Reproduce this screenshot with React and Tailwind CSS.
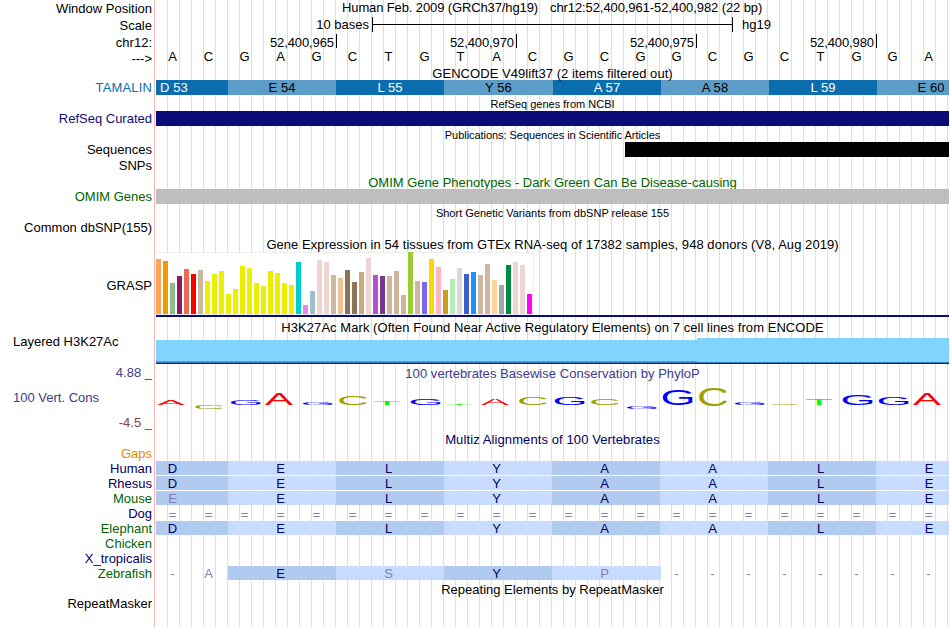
import React from 'react';
import clsx from 'clsx';

const SEQUENCE = 'ACGAGCTGTACGCGGCGCTGGA'.split('');

const COORDS = ['52,400,965', '52,400,970', '52,400,975', '52,400,980'];

const CODONS = [
  { label: 'D 53', width: 'w-[108px]' },
  { label: 'E 54', width: 'w-[108px]' },
  { label: 'L 55', width: 'w-[108px]' },
  { label: 'Y 56', width: 'w-[109px]' },
  { label: 'A 57', width: 'w-[108px]' },
  { label: 'A 58', width: 'w-[108px]' },
  { label: 'L 59', width: 'w-[108px]' },
  { label: 'E 60', width: 'w-[108px]' },
];

// [height in px, colour] for each GTEx tissue
const TISSUES = [
  [55, '#ffa54f'], [53, '#ee9a00'], [31, '#8fbc8f'], [38, '#8b1c62'], [45, '#ee6a50'], [40, '#ff0000'],
  [44, '#cdb79e'], [33, '#eeee00'], [40, '#eeee00'], [43, '#eeee00'], [20, '#eeee00'], [25, '#eeee00'],
  [48, '#eeee00'], [46, '#eeee00'], [31, '#eeee00'], [28, '#eeee00'], [43, '#eeee00'], [41, '#eeee00'],
  [31, '#eeee00'], [29, '#eeee00'], [52, '#00cdcd'], [9, '#ee82ee'], [23, '#9ac0cd'], [54, '#eed5d2'],
  [52, '#eed5d2'], [39, '#cdb79e'], [36, '#eec591'], [44, '#8b7355'], [32, '#8b7355'], [42, '#cdaa7d'],
  [56, '#eed5d2'], [39, '#b452cd'], [38, '#7a378b'], [38, '#cdb79e'], [43, '#cdb79e'], [19, '#cdb79e'],
  [62, '#9acd32'], [33, '#cdb79e'], [32, '#7a67ee'], [55, '#ffd700'], [47, '#ffb6c1'], [24, '#cd9b1d'],
  [35, '#b4eeb4'], [46, '#d9d9d9'], [40, '#3a5fcd'], [42, '#1e90ff'], [39, '#cdb79e'], [50, '#cdb79e'],
  [34, '#ffd39b'], [29, '#a6a6a6'], [49, '#008b45'], [52, '#eed5d2'], [49, '#eed5d2'], [20, '#ff00ff'],
];

// ink box of each letter in Liberation Sans at 100px
const GLYPHS = {
  A: { left: 0.5, width: 66, top: 68.8, height: 68.8, color: '#ff0000', x: 1.3, w: 27.7 },
  C: { left: 5, width: 63.5, top: 69.8, height: 70.8, color: '#a0a000', x: 3.2, w: 28 },
  G: { left: 5, width: 66.5, top: 69.8, height: 70.8, color: '#0000ff', x: 2.8, w: 30 },
  T: { left: 2.3, width: 56.5, top: 68.8, height: 68.8, color: '#00ff00', x: 2, w: 26 },
};

// [letter, top, bottom] measured from the top of the conservation track
const LOGO = [
  ['A', 19.7, 24.7], ['C', 25.8, 29], ['G', 20, 25], ['A', 13, 24.7], ['G', 22.8, 25], ['C', 16.7, 25.3],
  ['T', 21, 24.7], ['G', 19, 25], ['T', 23, 24.7], ['A', 19, 24.7], ['C', 17.7, 25.3], ['G', 16.7, 24.7],
  ['C', 18.7, 25], ['G', 26, 29], ['G', 10, 25.3], ['C', 8, 26], ['G', 22.8, 25], ['C', 24, 25.2],
  ['T', 18, 24.7], ['G', 15, 25], ['G', 16.7, 25], ['A', 13, 24.7],
];

const NAVY = 'text-[#000064]';
const GREEN = 'text-[#006400]';

const SPECIES = [
  { name: 'Human', color: NAVY, codons: 'DELYAALE' },
  { name: 'Rhesus', color: NAVY, codons: 'DELYAALE' },
  { name: 'Mouse', color: GREEN, codons: 'EELYAALE', faded: [0] },
  { name: 'Dog', color: NAVY, bases: '======================' },
  { name: 'Elephant', color: GREEN, codons: 'DELYAALE' },
  { name: 'Chicken', color: GREEN },
  { name: 'X_tropicalis', color: NAVY },
];

function Track({ label, height, labelClass, children }) {
  return (
    <div className={clsx('flex shrink-0', height)}>
      <div className={clsx('w-[154px] shrink-0 pr-[2px] text-right', labelClass)}>{label}</div>
      <div className="ml-[2px] w-[793px] overflow-x-clip">{children}</div>
    </div>
  );
}

// titles hang a little over the bar below them
function Title({ height, className, small, children }) {
  return (
    <Track height={height}>
      <div className={clsx('relative z-10 text-center', small && 'text-[11px] leading-[12px]', className)}>{children}</div>
    </Track>
  );
}

function Bases({ letters, className }) {
  return (
    <div className={clsx('-ml-[1.5px] flex', className)}>
      {letters.map((letter, i) => (
        <span key={i} className="w-9 shrink-0 text-center">{letter}</span>
      ))}
    </div>
  );
}

function GeneCodons() {
  return (
    <div className="-ml-9 flex h-[15px]">
      {CODONS.map((codon, i) => (
        <span
          key={codon.label}
          className={clsx(
            'shrink-0 text-center tracking-[0.1px]',
            codon.width,
            i % 2 === 0 ? 'bg-[#0c6dae] text-white' : 'bg-[#5c9cc8] text-black'
          )}
        >
          {codon.label}
        </span>
      ))}
    </div>
  );
}

function AlignedCodons({ codons, faded = [] }) {
  return (
    <div className="-ml-9 flex h-[14px]">
      {codons.split('').map((aa, i) => (
        <span
          key={i}
          className={clsx(
            'w-[108px] shrink-0 pr-[3px] text-center',
            i % 2 === 0 ? 'bg-[#b0caf0]' : 'bg-[#c8dcff]',
            i === 7 && 'w-[109px]',
            faded.includes(i) ? 'text-[#8080b4]' : NAVY
          )}
        >
          {aa}
        </span>
      ))}
    </div>
  );
}

function ZebrafishRow() {
  return (
    <div className="flex h-[14px] text-[#8080b4]">
      <div className="-ml-[1.5px] flex w-[73.5px] shrink-0">
        <span className="w-9 text-center">-</span>
        <span className="w-9 text-center">A</span>
      </div>
      <span className={clsx('w-[108px] shrink-0 bg-[#b0caf0] pr-[3px] text-center', NAVY)}>E</span>
      <span className="w-[108px] shrink-0 bg-[#c8dcff] pr-[3px] text-center">S</span>
      <span className={clsx('w-[108px] shrink-0 bg-[#b0caf0] pr-[3px] text-center', NAVY)}>Y</span>
      <span className="w-[109px] shrink-0 bg-[#c8dcff] pr-1 text-center">P</span>
      <div className="-ml-[2.5px] flex">
        {'--------'.split('').map((dash, i) => (
          <span key={i} className="w-9 shrink-0 text-center">{dash}</span>
        ))}
      </div>
    </div>
  );
}

function ConservationLogo() {
  return (
    <svg width="793" height="48" className="block font-['Liberation_Sans',sans-serif] text-[100px]">
      {LOGO.map(([letter, top, bottom], i) => {
        const g = GLYPHS[letter];
        const sx = g.w / g.width;
        const sy = (bottom - top) / g.height;
        const x = i * 36 + g.x - g.left * sx;
        const y = top + g.top * sy;
        return (
          <text key={i} fill={g.color} transform={`translate(${x} ${y}) scale(${sx} ${sy})`}>
            {letter}
          </text>
        );
      })}
    </svg>
  );
}

export default function App() {
  return (
    <div className="flex h-[627px] w-[950px] overflow-hidden bg-white font-['Liberation_Sans',Arial,sans-serif] text-[13px] leading-[15px] whitespace-pre text-black">
      <div className="relative flex w-[949px] flex-col">
        {/* guide lines, one every third of a base */}
        <div className="absolute inset-y-0 left-[154px] right-0 border-l border-[#ffb4b4] pl-px">
          <div className="h-full bg-[linear-gradient(to_right,transparent_11px,#dcdcf8_11px)] bg-size-[12px_100%]" />
        </div>

        <div className="relative flex flex-col">
          <Track label="Window Position" height="h-[17px]" labelClass="pt-px">
            <div className="flex pl-[186px]">
              <span className="w-[208px] tracking-[-0.12px]">Human Feb. 2009 (GRCh37/hg19)</span>
              <span className="tracking-[-0.09px]">chr12:52,400,961-52,400,982 (22 bp)</span>
            </div>
          </Track>

          <Track label="Scale" height="h-[17px]" labelClass="pt-px">
            <div className="flex">
              <span className="w-[213px] text-right">10 bases</span>
              <div className="ml-[3px] flex h-[15px] w-[361px] items-center border-x border-black">
                <div className="h-px w-full bg-black" />
              </div>
              <span className="ml-[9px]">hg19</span>
            </div>
          </Track>

          <Track label="chr12:" height="h-4" labelClass="pt-px">
            <div className="flex">
              {COORDS.map((coord, i) => (
                <div
                  key={coord}
                  className={clsx(
                    'h-[14px] border-r border-black pt-px pr-[2px] text-right tracking-[-0.1px]',
                    i === 0 ? 'w-[181px]' : 'w-[180px]'
                  )}
                >
                  {coord}
                </div>
              ))}
            </div>
          </Track>

          <Track label="--->" height="h-4" labelClass="pt-px">
            <Bases letters={SEQUENCE} className="-mt-px" />
          </Track>

          <Title height="h-[14px]" className="tracking-[0.05px]">GENCODE V49lift37 (2 items filtered out)</Title>
          <Track label="TAMALIN" height="h-[15px]" labelClass="text-[#0c6dae] tracking-[0.15px]">
            <GeneCodons />
          </Track>

          <Title height="h-4" small className="pt-[3px]">RefSeq genes from NCBI</Title>
          <Track label="RefSeq Curated" height="h-[15px]" labelClass="text-[#0c0c78]">
            <div className="h-full bg-[#0c0c78]" />
          </Track>

          <Title height="h-4" small className="pt-[3px] tracking-[-0.05px]">Publications: Sequences in Scientific Articles</Title>
          <Track label="Sequences" height="h-[15px]">
            <div className="ml-[469px] h-full bg-black" />
          </Track>
          <Track label="SNPs" height="h-4" labelClass="pt-px" />

          <Track height="h-4">
            <div className={clsx('h-4 overflow-hidden pt-[2px] text-center', GREEN)}>
              OMIM Gene Phenotypes - Dark Green Can Be Disease-causing
            </div>
          </Track>
          <Track label="OMIM Genes" height="h-[15px]" labelClass={GREEN}>
            <div className="h-full bg-[#bebebe]" />
          </Track>

          <Title height="h-[15px]" small className="pt-[3px]">Short Genetic Variants from dbSNP release 155</Title>
          <Track label="Common dbSNP(155)" height="h-[17px]" labelClass="pt-px" />

          <Title height="h-4" className="pt-px tracking-[0.055px]">
            Gene Expression in 54 tissues from GTEx RNA-seq of 17382 samples, 948 donors (V8, Aug 2019)
          </Title>
          <Track label="GRASP" height="h-[65px]" labelClass="pt-[26px]">
            <div className="flex h-[63px] w-[378px] items-end gap-[2px] border-r border-b border-[#eeeeee] bg-white bg-[linear-gradient(#eeeeee_1px,transparent_1px)]">
              {TISSUES.map(([height, color], i) => (
                <div key={i} className="w-[5px] shrink-0" style={{ height, backgroundColor: color }} />
              ))}
            </div>
            <div className="h-[2px] bg-[#0c0c78]" />
          </Track>

          <Title height="h-[17px]" className="pt-[3px] tracking-[0.055px]">
            H3K27Ac Mark (Often Found Near Active Regulatory Elements) on 7 cell lines from ENCODE
          </Title>
          <Track label="Layered H3K27Ac" height="h-[30px]" labelClass="pl-[13px] !text-left">
            <div className="flex h-[28px] items-end">
              <div className="h-[22px] w-[541px] border-b border-[#40b0c4] bg-[#80d4ff]" />
              <div className="h-[24px] w-[252px] bg-[#80d4ff]" />
            </div>
            <div className="h-px bg-[#3c78b4]" />
            <div className="h-px bg-[#1c1c6c]" />
          </Track>

          <Track label="4.88 _" height="h-4" labelClass="pt-px text-[#3c3c8c]">
            <div className="pt-[2px] text-center tracking-[0.05px] text-[#3c3c8c]">
              100 vertebrates Basewise Conservation by PhyloP
            </div>
          </Track>
          <Track
            height="h-12"
            label={
              <div className="flex flex-col gap-[10px] pt-[10px]">
                <span className="pl-[13px] text-left text-[#3c3c8c]">100 Vert. Cons</span>
                <span className="text-[#8c3c3c]">-4.5 _</span>
              </div>
            }
          >
            <ConservationLogo />
          </Track>

          <Title height="h-[18px]" className={clsx('pt-1 tracking-[0.1px]', NAVY)}>Multiz Alignments of 100 Vertebrates</Title>
          <Track label="Gaps" height="h-[15px]" labelClass="text-[#e68a00]" />
          {SPECIES.map(({ name, color, codons, faded, bases }) => (
            <Track key={name} label={name} height="h-[15px]" labelClass={color}>
              {codons && <AlignedCodons codons={codons} faded={faded} />}
              {bases && <Bases letters={bases.split('')} className="pt-px text-[#8080b4]" />}
            </Track>
          ))}
          <Track label="Zebrafish" height="h-[15px]" labelClass={GREEN}>
            <ZebrafishRow />
          </Track>

          <Title height="h-[15px]" className="pt-px">Repeating Elements by RepeatMasker</Title>
          <Track label="RepeatMasker" height="h-[31px]" />
        </div>
      </div>
    </div>
  );
}
